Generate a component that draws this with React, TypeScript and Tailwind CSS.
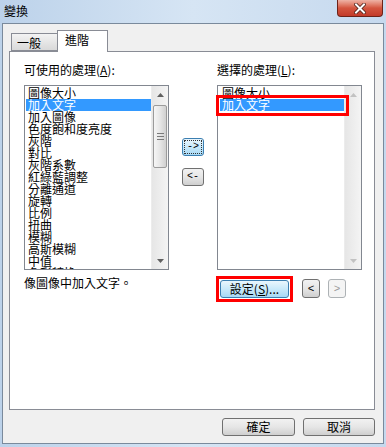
import React from 'react';

const AVAILABLE = [
  '圖像大小', '加入文字', '加入圖像', '色度飽和度亮度', '灰階', '對比', '灰階系數',
  '紅綠藍調整', '分離通道', '旋轉', '比例', '扭曲', '模糊', '高斯模糊', '中值', '色彩轉換',
];
const SELECTED = ['圖像大小', '加入文字'];

function Arrow({ up, color }: { up?: boolean; color: string }) {
  return (
    <svg width="7" height="4" viewBox="0 0 7 4">
      <path d={up ? 'M0 4 L3.5 0 L7 4Z' : 'M0 0 L3.5 4 L7 0Z'} fill={color} />
    </svg>
  );
}

function ScrollBar({ disabled }: { disabled?: boolean }) {
  const c = disabled ? '#c2c2c2' : '#606060';
  return (
    <div className="w-[17px] flex flex-col bg-gradient-to-r from-[#e6e6e6] to-[#f4f4f4] border-l border-[#ececec]">
      <div className="h-[17px] flex items-center justify-center">
        <Arrow up color={c} />
      </div>
      {!disabled && (
        <div className="mt-[2px] mx-[1px] h-[63px] rounded-[2px] border border-[#9b9b9b] bg-gradient-to-r from-[#f6f6f6] via-[#e6e6e6] to-[#d0d0d0] flex flex-col items-center justify-center gap-[2px]">
          <div className="w-[7px] h-px bg-[#7a7a7a]" />
          <div className="w-[7px] h-px bg-[#7a7a7a]" />
          <div className="w-[7px] h-px bg-[#7a7a7a]" />
        </div>
      )}
      <div className="flex-1" />
      <div className="h-[17px] flex items-center justify-center">
        <Arrow color={c} />
      </div>
    </div>
  );
}

function ListBox({ items, active, pad }: { items: string[]; active: number; pad: string }) {
  return (
    <div className="h-[185px] border border-[#828790] bg-white flex overflow-hidden">
      <div className={`flex-1 pt-[1px] overflow-hidden ${pad}`}>
        {items.map((it, i) => (
          <div
            key={it}
            className={`h-[12px] pl-[2px] whitespace-nowrap ${i === active ? 'bg-[#3399ff] text-white' : ''}`}
          >
            {it}
          </div>
        ))}
      </div>
      <ScrollBar disabled={items.length < 10} />
    </div>
  );
}

const grayBtn =
  'border border-[#707070] rounded-[3px] bg-gradient-to-b from-[#f2f2f2] via-[#e6e6e6] to-[#cfcfcf] flex items-center justify-center';
const blueBtn =
  'border border-[#3c7fb1] rounded-[3px] bg-gradient-to-b from-[#eaf6fd] via-[#c9e9fa] to-[#a7d9f5] flex items-center justify-center';

export default function App() {
  return (
    <div className="w-[386px] h-[447px] overflow-hidden flex flex-col bg-gradient-to-r from-[#bcd2ea] via-[#d6e5f4] to-[#c6d9ee] text-[12px] leading-[12px] text-black font-['Noto_Sans_CJK_TC','Noto_Sans',sans-serif]">
      {/* 標題列 */}
      <div className="h-[23px] flex items-start">
        <span className="pl-[4px] pt-[5px]">變換</span>
        <div className="ml-auto mr-[3px] w-[46px] h-[17px] rounded-b-[4px] border border-t-0 border-[#6d2218] bg-gradient-to-b from-[#eeb3a6] via-[#d4553f] to-[#c23a2a] flex items-center justify-center">
          <svg width="12" height="11" viewBox="0 0 12 11">
            <path d="M2 1.5 L10 9.5 M10 1.5 L2 9.5" stroke="#4a1d15" strokeWidth="3.6" strokeLinecap="square" />
            <path d="M2 1.5 L10 9.5 M10 1.5 L2 9.5" stroke="#ffffff" strokeWidth="2" strokeLinecap="square" />
          </svg>
        </div>
      </div>

      {/* 視窗內容 */}
      <div className="mx-[2px] h-[421px] border border-[#7a8a9c] bg-[#f0f0f0] flex flex-col">
        <div className="flex items-end pl-[8px] pt-[6px]">
          <div className="w-[46px] h-[18px] border border-r-0 border-[#898c95] bg-gradient-to-b from-[#f3f3f3] to-[#d9d9d9] pl-[5px] pt-[3px]">
            一般
          </div>
          <div className="relative z-10 -mb-px w-[51px] h-[22px] border border-b-0 border-[#898c95] bg-white pl-[7px] pt-[3px]">
            進階
          </div>
        </div>

        <div className="ml-[6px] w-[366px] h-[359px] border border-[#898c95] bg-white flex pl-[14px] pt-[12px]">
          {/* 左欄 */}
          <div className="w-[145px]">
            <div className="h-[12px] whitespace-nowrap">
              可使用的處理(<u>A</u>):
            </div>
            <div className="mt-[9px]">
              <ListBox items={AVAILABLE} active={1} pad="pl-[1px]" />
            </div>
            <div className="mt-[7px] whitespace-nowrap">像圖像中加入文字。</div>
          </div>

          {/* 中間按鈕 */}
          <div className="ml-[13px] w-[22px] pt-[74px] flex flex-col gap-[12px]">
            <div className={`h-[18px] ${blueBtn} p-[1px]`}>
              <div className="w-full h-full border border-dotted border-[#333] flex items-center justify-center text-[10px] font-['Liberation_Mono',monospace]">
                -&gt;
              </div>
            </div>
            <div className={`h-[18px] ${grayBtn} text-[10px] font-['Liberation_Mono',monospace]`}>&lt;-</div>
          </div>

          {/* 右欄 */}
          <div className="ml-[13px] w-[145px]">
            <div className="h-[12px] whitespace-nowrap">
              選擇的處理(<u>L</u>):
            </div>
            <div className="mt-[9px] relative">
              <ListBox items={SELECTED} active={1} pad="pl-[2px]" />
              <div className="absolute left-[-1px] top-[10px] w-[133px] h-[21px] border-[3px] border-[#ff0000]" />
            </div>
            <div className="mt-[9px] flex items-center">
              <div className="relative ml-[3px]">
                <div className={`w-[69px] h-[18px] ${blueBtn}`}>
                  設定(<u>S</u>)...
                </div>
                <div className="absolute -inset-[4px] border-[3px] border-[#ff0000]" />
              </div>
              <div className={`ml-[13px] w-[18px] h-[19px] ${grayBtn} text-[11px] font-['Liberation_Mono',monospace]`}>&lt;</div>
              <div className="ml-[8px] w-[18px] h-[19px] border border-[#adb2b5] rounded-[3px] bg-[#f4f4f4] text-[#9a9a9a] flex items-center justify-center text-[11px] font-['Liberation_Mono',monospace]">
                &gt;
              </div>
            </div>
          </div>
        </div>

        <div className="mt-[8px] flex justify-end gap-[8px] pr-[8px]">
          <div className={`w-[73px] h-[18px] ${grayBtn}`}>確定</div>
          <div className={`w-[72px] h-[18px] ${grayBtn}`}>取消</div>
        </div>
      </div>
    </div>
  );
}
